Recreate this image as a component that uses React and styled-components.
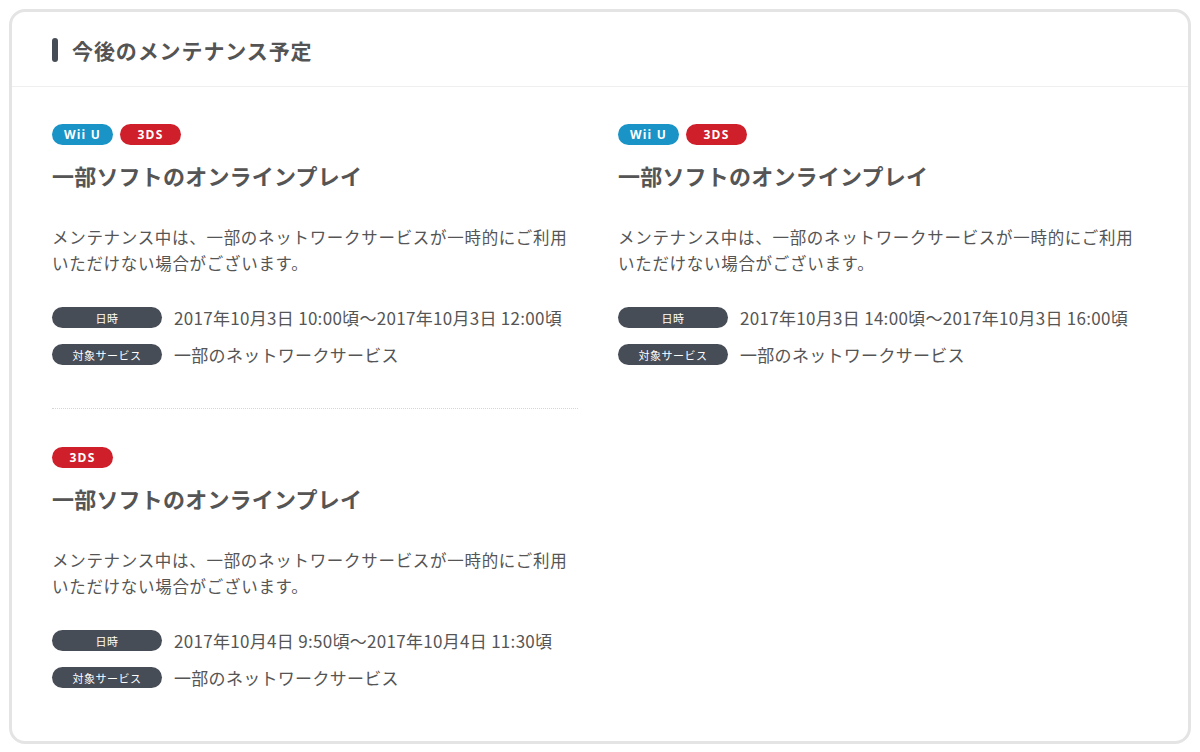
import React from 'react'
import styled, { createGlobalStyle } from 'styled-components'

const GlobalStyle = createGlobalStyle`
  html, body {
    margin: 0;
    padding: 0;
    background: #fff;
  }
  body {
    font-family: "Noto Sans CJK JP", "Noto Sans", sans-serif;
    color: #4f4f4f;
  }
`

const columns = [
  [
    {
      tags: ['wiiu', '3ds'],
      date: '2017年10月3日 10:00頃〜2017年10月3日 12:00頃',
      divider: true,
    },
    {
      tags: ['3ds'],
      date: '2017年10月4日 9:50頃〜2017年10月4日 11:30頃',
    },
  ],
  [
    {
      tags: ['wiiu', '3ds'],
      date: '2017年10月3日 14:00頃〜2017年10月3日 16:00頃',
    },
  ],
]

function App() {
  return (
    <Page>
      <GlobalStyle />
      <Card>
        <Header>
          <Heading>今後のメンテナンス予定</Heading>
        </Header>
        <Body>
          {columns.map((col, ci) => (
            <Column key={ci}>
              {col.map((item, i) => (
                <Item key={i} divider={item.divider}>
                  <Tags>
                    {item.tags.map((t) => (
                      <Tag key={t} kind={t}>{t === 'wiiu' ? 'Wii U' : '3DS'}</Tag>
                    ))}
                  </Tags>
                  <Title>一部ソフトのオンラインプレイ</Title>
                  <Desc>
                    メンテナンス中は、一部のネットワークサービスが一時的にご利用
                    <br />
                    いただけない場合がございます。
                  </Desc>
                  <Meta>
                    <MetaRow>
                      <Label>日時</Label>
                      <Value>{item.date}</Value>
                    </MetaRow>
                    <MetaRow>
                      <Label>対象サービス</Label>
                      <Value>一部のネットワークサービス</Value>
                    </MetaRow>
                  </Meta>
                </Item>
              ))}
            </Column>
          ))}
        </Body>
      </Card>
    </Page>
  )
}

export default App

const Page = styled.div`
  padding: 9px 9px 8px 9px;
  box-sizing: border-box;
  width: 1200px;
  height: 752px;
`

const Card = styled.div`
  box-sizing: border-box;
  height: 735px;
  border: 3px solid #e4e4e4;
  border-radius: 16px;
  background: #fff;
  display: flex;
  flex-direction: column;
`

const Header = styled.div`
  height: 75px;
  box-sizing: border-box;
  border-bottom: 1px solid #efefef;
  display: flex;
  align-items: center;
  padding: 2px 40px 0;
`

const Heading = styled.h2`
  margin: 0;
  display: flex;
  align-items: center;
  gap: 14px;
  font-size: 21px;
  font-weight: 700;
  color: #545454;
  letter-spacing: 0.9px;

  &::before {
    content: '';
    display: block;
    width: 6px;
    height: 24px;
    border-radius: 3px;
    background: #474d57;
  }
`

const Body = styled.div`
  display: grid;
  grid-template-columns: 526px 526px;
  column-gap: 40px;
  padding: 0 40px;
`

const Column = styled.div`
  display: flex;
  flex-direction: column;
`

const Item = styled.div`
  padding: 37px 0 43px;
  border-bottom: ${(p) => (p.divider ? '1px dotted #d6d6d6' : 'none')};
  & + & {
    padding-top: 38px;
  }
`

const Tags = styled.div`
  display: flex;
  gap: 7px;
`

const Tag = styled.span`
  display: inline-flex;
  align-items: center;
  justify-content: center;
  width: 61px;
  height: 21px;
  border-radius: 11px;
  background: ${(p) => (p.kind === 'wiiu' ? '#1a93c6' : '#cf1f2a')};
  color: #fff;
  font-family: "Open Sans", "Noto Sans", sans-serif;
  font-size: 12px;
  font-weight: 700;
  letter-spacing: 1.2px;
`

const Title = styled.h3`
  margin: 14px 0 0;
  font-size: 22px;
  line-height: 32px;
  font-weight: 700;
  color: #555;
  letter-spacing: 0.2px;
`

const Desc = styled.p`
  margin: 33px 0 0;
  font-size: 16.5px;
  line-height: 26px;
  color: #555;
  letter-spacing: 0.7px;
`

const Meta = styled.div`
  margin-top: 31px;
  display: flex;
  flex-direction: column;
  gap: 16px;
`

const MetaRow = styled.div`
  display: flex;
  align-items: center;
  gap: 12px;
  height: 21px;
`

const Label = styled.span`
  flex: none;
  display: inline-flex;
  align-items: center;
  justify-content: center;
  width: 110px;
  height: 21px;
  border-radius: 11px;
  background: #474d57;
  color: #fff;
  font-size: 11px;
  letter-spacing: 0.5px;
`

const Value = styled.span`
  font-size: 17px;
  color: #555;
  letter-spacing: 0.3px;
`
